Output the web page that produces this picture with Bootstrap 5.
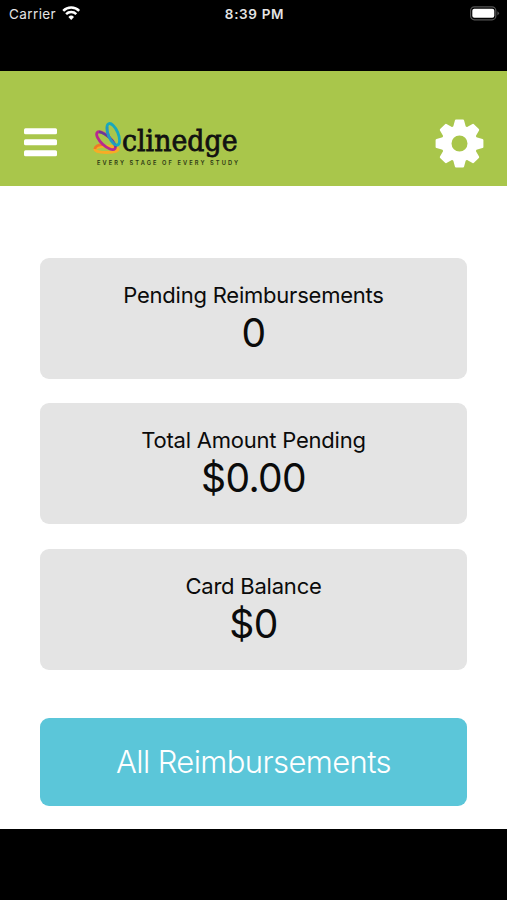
<!DOCTYPE html>
<html lang="en">
<head>
<meta charset="utf-8">
<meta name="viewport" content="width=device-width, initial-scale=1">
<title>Clinedge</title>
<link href="https://cdn.jsdelivr.net/npm/bootstrap@5.3.0/dist/css/bootstrap.min.css" rel="stylesheet">
<style>
body { font-family: Inter, "Liberation Sans", sans-serif; color: #0b0b0b; }
.phone { height: 900px; max-width: 507px; }
.status-bar { height: 71px; font-size: 13.5px; line-height: 20px; padding: 4px 7px 0 9px; color: #e4e4e4; }
.status-carrier { letter-spacing: .4px; }
.status-time { font-weight: 600; font-size: 13.5px; letter-spacing: .65px; }
.status-bar svg, .app-header svg { display: block; flex: none; }
.app-header { height: 115px; background: #a9c64b; padding: 48px 23px 0 23px; }
.icon-btn { background: none; border: 0; padding: 0; }
.logo { margin-left: 34px; }
.screen { padding: 72px 40px 0; height: 643px; }
.stat { height: 121px; margin-bottom: 24.4px; border-radius: 9px; background: #e4e4e4; padding-top: 22px; }
.stat-label { font-size: 22px; line-height: 30px; letter-spacing: -.22px; }
.stat-value { font-size: 39px; line-height: 46px; letter-spacing: -.6px; }
.btn-all { height: 88px; margin-top: 48px; border-radius: 9px; background: #5bc6d9; color: #fff; font-size: 31px; font-weight: 300; letter-spacing: -.6px; }
</style>
<script src="https://cdn.jsdelivr.net/npm/bootstrap@5.3.0/dist/js/bootstrap.bundle.min.js"></script>
</head>
<body class="bg-black">
<div class="phone mx-auto d-flex flex-column bg-black">
  <div class="status-bar row g-0 bg-black">
    <div class="col d-flex align-items-start">
      <span class="status-carrier">Carrier</span>
      <svg class="ms-1" width="22" height="20" viewBox="-1.500 -1.600 22 20" fill="none" stroke="#fff" stroke-width="2.500">
        <path d="M1.700 5.200a11.300 11.300 0 0 1 16 0M4.600 8.500a7.200 7.200 0 0 1 10.200 0"/>
        <path d="M9.700 14.300 6.900 11.300a4 4 0 0 1 5.600 0z" fill="#fff" stroke="none"/>
      </svg>
    </div>
    <div class="col-auto status-time">8:39 PM</div>
    <div class="col d-flex justify-content-end">
      <svg width="31" height="20" viewBox="0 0 31 20">
        <rect x="1.6" y="2.8" width="25.2" height="13" rx="3.8" fill="none" stroke="#555" stroke-width="1.2"/>
        <rect x="3.3" y="4.8" width="22" height="9" rx="2" fill="#fff"/>
        <path d="M28.4 7.2q3.2 2.1 0 4.3z" fill="#555"/>
      </svg>
    </div>
  </div>

  <header class="app-header d-flex align-items-start">
    <button class="icon-btn" aria-label="Menu">
      <svg width="35" height="48" viewBox="0 0 35 48" fill="#fff"><rect x="1" y="9.2" width="33" height="6" rx="1.5"/><rect x="1" y="20.3" width="33" height="6" rx="1.5"/><rect x="1" y="31.3" width="33" height="6" rx="1.5"/></svg>
    </button>
    <svg class="logo" width="200" height="60" viewBox="92 119 200 60" role="img" aria-label="clinedge, every stage of every study">
      <g fill="none" stroke-width="2.800">
        <ellipse cx="106.500" cy="149.300" rx="11.700" ry="3.200" stroke="#f8ac25"/>
        <path d="M94.800 149c.5-3 4-4.500 9-4.400" stroke="#ed7b25"/>
        <ellipse cx="106" cy="140.700" rx="12" ry="4.800" stroke="#b8288f" transform="rotate(43 106 140.700)"/>
        <path d="M99 131.800c7 1.500 15.500 9.500 17 15.500" stroke="#673b96" stroke-width="2.200"/>
        <ellipse cx="113.200" cy="134.300" rx="4.900" ry="11.500" stroke="#18a9bd" transform="rotate(-23 113.200 134.300)"/>
        <path d="M107.300 126.500c-1 6 3 15 8.500 18.300" stroke="#2796bd" stroke-width="2.200"/>
      </g>
      <text x="122" y="150.700" font-family="DejaVu Serif, serif" font-size="30" fill="#111" stroke="#111" stroke-width=".8" textLength="115.500" lengthAdjust="spacingAndGlyphs">clinedge</text>
      <text x="97" y="164.800" font-family="Inter, sans-serif" font-size="5.700" font-weight="600" fill="#2c3713" textLength="141">EVERY STAGE OF EVERY STUDY</text>
    </svg>
    <button class="icon-btn ms-auto" aria-label="Settings">
      <svg width="50" height="49" viewBox="-25.500 -24.500 50 49" fill="#fff">
        <path fill-rule="evenodd" d="M-18 0a18 18 0 1 0 36 0a18 18 0 1 0-36 0M-8 0a8 8 0 1 1 16 0a8 8 0 1 1-16 0"/>
        <path id="tooth" d="M-6.500-16-4.600-23q.2-.9 1.100-.9h7q.9 0 1.100.9L6.500-16z"/>
        <use href="#tooth" transform="rotate(45)"/><use href="#tooth" transform="rotate(90)"/><use href="#tooth" transform="rotate(135)"/>
        <use href="#tooth" transform="rotate(180)"/><use href="#tooth" transform="rotate(225)"/><use href="#tooth" transform="rotate(270)"/><use href="#tooth" transform="rotate(315)"/>
      </svg>
    </button>
  </header>

  <main class="screen bg-white">
    <section class="stat text-center">
      <div class="stat-label">Pending Reimbursements</div>
      <div class="stat-value">0</div>
    </section>
    <section class="stat text-center">
      <div class="stat-label">Total Amount Pending</div>
      <div class="stat-value">$0.00</div>
    </section>
    <section class="stat text-center mb-0">
      <div class="stat-label">Card Balance</div>
      <div class="stat-value">$0</div>
    </section>
    <button class="btn btn-all w-100 border-0">All Reimbursements</button>
  </main>
</div>
</body>
</html>
